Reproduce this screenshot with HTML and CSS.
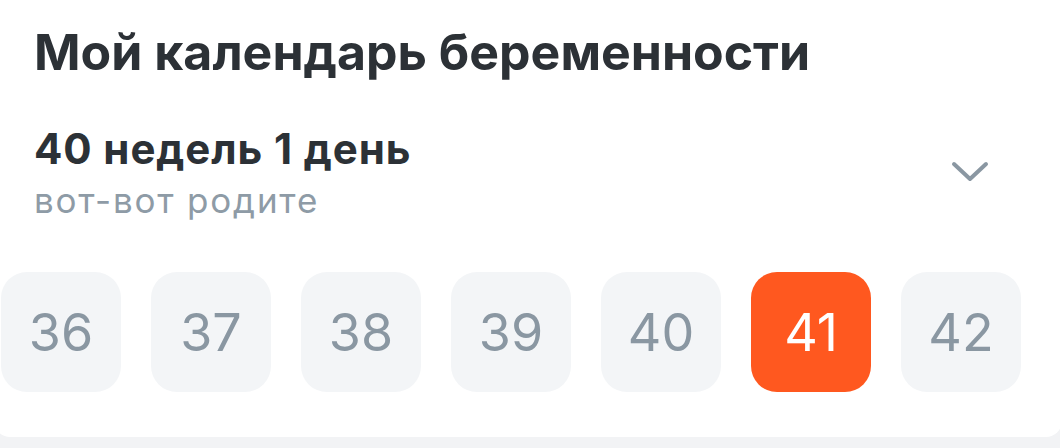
FILE: index.html
```html
<!DOCTYPE html>
<html lang="ru">
<head>
    <meta charset="UTF-8">
    <meta name="viewport" content="width=device-width, initial-scale=1.0">
    <title>Мой календарь беременности</title>
    <link rel="stylesheet" href="styles.css">
</head>
<body>
    <div class="card">
        <h1 class="title">Мой календарь беременности</h1>
        <div class="status">
            <div class="status-text">
                <div class="term">40 недель 1 день</div>
                <div class="hint">вот-вот родите</div>
            </div>
            <button class="toggle" type="button" aria-label="Развернуть">
                <svg width="40" height="24" viewBox="0 0 40 24">
                    <path d="M4 4 L20 19 L36 4" fill="none" stroke="#8a97a2" stroke-width="4" stroke-linecap="round" stroke-linejoin="round"/>
                </svg>
            </button>
        </div>
        <div class="weeks">
            <div class="week">36</div>
            <div class="week">37</div>
            <div class="week">38</div>
            <div class="week">39</div>
            <div class="week">40</div>
            <div class="week active">41</div>
            <div class="week">42</div>
        </div>
    </div>
</body>
</html>
```

FILE: styles.css
```css
body {
    font-family: 'Inter', 'Roboto', sans-serif;
    margin: 0;
    padding: 0;
    background-color: #f2f3f5;
    overflow: hidden;
}
.card {
    background: #fff;
    margin: 0 -2px 0 -6px;
    border-radius: 0 0 16px 16px;
    padding: 22px 0 45px;
}
.title {
    margin: 0;
    padding-left: 40px;
    font-size: 50px;
    line-height: 60px;
    font-weight: 700;
    color: #2c3136;
}
.status {
    display: flex;
    align-items: center;
    justify-content: space-between;
    margin-top: 42px;
    padding: 0 72px 0 40px;
}
.term {
    font-size: 42px;
    line-height: 50px;
    font-weight: 700;
    letter-spacing: 0.9px;
    color: #2c3136;
}
.hint {
    margin-top: 6px;
    font-size: 35px;
    line-height: 40px;
    letter-spacing: 1.8px;
    color: #8e9ba6;
}
.toggle {
    background: none;
    border: none;
    padding: 0;
    width: 40px;
    height: 24px;
    cursor: pointer;
}
.toggle svg {
    display: block;
}
.weeks {
    display: flex;
    gap: 30px;
    margin-top: 52px;
    padding-left: 7px;
}
.week {
    flex: 0 0 120px;
    height: 120px;
    border-radius: 26px;
    background: #f3f5f7;
    display: flex;
    justify-content: center;
    align-items: center;
    font-size: 52px;
    color: #8a97a2;
}
.week.active {
    background: #ff581f;
    color: #fff;
}
```
